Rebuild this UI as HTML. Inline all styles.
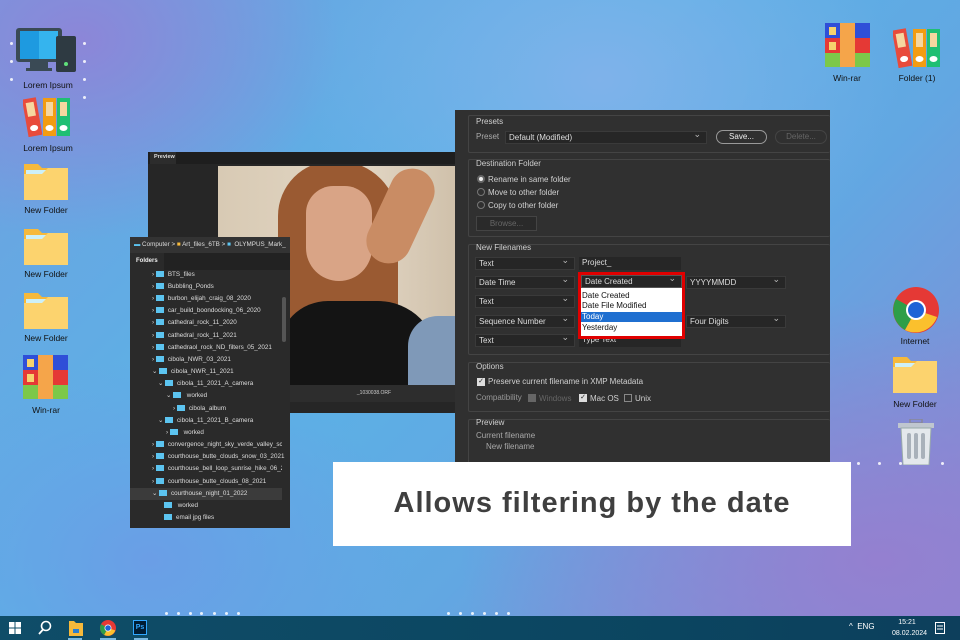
<!DOCTYPE html>
<html><head><meta charset="utf-8"><style>
*{margin:0;padding:0;box-sizing:border-box}
body{width:960px;height:640px;overflow:hidden;position:relative;font-family:"Liberation Sans",sans-serif;
background:
radial-gradient(ellipse 260px 200px at 80px 40px,#8c86d8 0%,rgba(140,134,216,0) 100%),
radial-gradient(ellipse 420px 260px at 880px 560px,#9480d0 0%,rgba(148,128,208,0) 100%),
radial-gradient(ellipse 300px 220px at 600px 80px,#7fb2ea 0%,rgba(127,178,234,0) 100%),
radial-gradient(ellipse 260px 200px at 150px 560px,#6a9ee6 0%,rgba(106,158,230,0) 100%),
linear-gradient(135deg,#6fa0e0 0%,#5bb2e6 40%,#62a7e2 65%,#8a86d2 100%);}
.a{position:absolute}
.lbl{position:absolute;font-size:8.5px;color:#111;text-align:center;width:70px}
.dot{position:absolute;width:3px;height:3px;border-radius:2px;background:#fff;opacity:.85}
.dlg{position:absolute;left:455px;top:110px;width:375px;height:360px;background:#303030}
.t{position:absolute;font-size:8px;color:#d0d0d0;white-space:nowrap}
.sec{position:absolute;border:1px solid #444;border-radius:2px}
.dd{position:absolute;height:13px;background:#262626;border:1px solid #3a3a3a;font-size:8px;color:#ddd;padding-left:3px;line-height:11px}
.dd:after{content:"⌄";position:absolute;right:5px;top:-3px;font-size:9px;color:#bbb}
.fld{position:absolute;height:13px;background:#262626;font-size:8px;color:#ddd;padding-left:3px;line-height:12px}
.fp{position:absolute;left:130px;top:237px;width:160px;height:291px;background:#2a2a2a}
.row{position:absolute;font-size:6.3px;color:#ddd;white-space:nowrap;height:10px;line-height:10px}
.row i{display:inline-block;width:8px;height:6px;background:#5cc4f0;margin-right:4px;vertical-align:-1px}
.fold{position:absolute;width:44px;height:40px}
</style></head><body>

<div class="dot" style="left:10px;top:42px"></div><div class="dot" style="left:10px;top:60px"></div><div class="dot" style="left:10px;top:78px"></div>
<div class="dot" style="left:83px;top:42px"></div><div class="dot" style="left:83px;top:60px"></div><div class="dot" style="left:83px;top:78px"></div>
<div class="dot" style="left:83px;top:96px"></div>
<div class="dot" style="left:165px;top:612px"></div><div class="dot" style="left:177px;top:612px"></div><div class="dot" style="left:189px;top:612px"></div><div class="dot" style="left:200px;top:612px"></div><div class="dot" style="left:213px;top:612px"></div><div class="dot" style="left:225px;top:612px"></div><div class="dot" style="left:237px;top:612px"></div>
<div class="dot" style="left:857px;top:462px"></div><div class="dot" style="left:878px;top:462px"></div><div class="dot" style="left:899px;top:462px"></div><div class="dot" style="left:920px;top:462px"></div><div class="dot" style="left:941px;top:462px"></div>
<div class="dot" style="left:447px;top:612px"></div><div class="dot" style="left:459px;top:612px"></div><div class="dot" style="left:471px;top:612px"></div><div class="dot" style="left:483px;top:612px"></div><div class="dot" style="left:495px;top:612px"></div><div class="dot" style="left:507px;top:612px"></div>

<svg class="a" style="left:16px;top:26px" width="62" height="48" viewBox="0 0 62 48">
<rect x="0" y="2" width="46" height="34" rx="3" fill="#3a4a55"/><rect x="4" y="5" width="38" height="28" fill="#1e9ae0"/><rect x="23" y="5" width="19" height="28" fill="#35b4ee"/>
<rect x="14" y="36" width="18" height="6" fill="#3a4a55"/><rect x="10" y="42" width="26" height="3" fill="#3a4a55"/>
<rect x="40" y="10" width="20" height="36" rx="2" fill="#2e3a42"/><circle cx="50" cy="38" r="2" fill="#5fe07a"/></svg>
<div class="lbl" style="left:13px;top:80px">Lorem Ipsum</div>
<svg class="a" style="left:23px;top:96px" width="50" height="42" viewBox="0 0 50 42">
<g transform="rotate(-10 10 20)"><rect x="2" y="2" width="14" height="38" fill="#e84b3c"/><rect x="5" y="6" width="8" height="14" fill="#f6d7a0"/><ellipse cx="9" cy="32" rx="4" ry="3" fill="#fff"/></g>
<rect x="20" y="2" width="13" height="38" fill="#f39c12"/><rect x="23" y="6" width="7" height="14" fill="#f6d7a0"/><ellipse cx="26.5" cy="32" rx="4" ry="3" fill="#fff"/>
<rect x="34" y="2" width="13" height="38" fill="#1fbf73"/><rect x="37" y="6" width="7" height="14" fill="#f6d7a0"/><ellipse cx="40.5" cy="32" rx="4" ry="3" fill="#fff"/></svg>
<div class="lbl" style="left:13px;top:143px">Lorem Ipsum</div>
<svg class="fold" style="left:24px;top:160px" viewBox="0 0 44 40"><path d="M0 4h14l4 4h26v32H0z" fill="#f6b93b"/><rect x="2" y="10" width="40" height="6" fill="#cdf0f8"/><path d="M0 14h18l6 -6h20v32H0z" fill="#fcd36e"/></svg>
<div class="lbl" style="left:11px;top:205px">New Folder</div>
<svg class="fold" style="left:24px;top:225px" viewBox="0 0 44 40"><path d="M0 4h14l4 4h26v32H0z" fill="#f6b93b"/><rect x="2" y="10" width="40" height="6" fill="#cdf0f8"/><path d="M0 14h18l6 -6h20v32H0z" fill="#fcd36e"/></svg>
<div class="lbl" style="left:11px;top:269px">New Folder</div>
<svg class="fold" style="left:24px;top:289px" viewBox="0 0 44 40"><path d="M0 4h14l4 4h26v32H0z" fill="#f6b93b"/><rect x="2" y="10" width="40" height="6" fill="#cdf0f8"/><path d="M0 14h18l6 -6h20v32H0z" fill="#fcd36e"/></svg>
<div class="lbl" style="left:11px;top:333px">New Folder</div>
<svg class="a" style="left:23px;top:355px" width="45" height="44" viewBox="0 0 45 44"><rect width="15" height="15" fill="#2f4fd8"/><rect x="30" width="15" height="15" fill="#2f4fd8"/><rect y="15" width="15" height="15" fill="#e53935"/><rect x="30" y="15" width="15" height="15" fill="#e53935"/><rect y="30" width="15" height="14" fill="#7cc84a"/><rect x="30" y="30" width="15" height="14" fill="#7cc84a"/><rect x="15" width="15" height="44" fill="#f5a54a"/><rect x="4" y="4" width="7" height="8" fill="#f6d36e"/><rect x="4" y="19" width="7" height="8" fill="#f6d36e"/></svg>
<div class="lbl" style="left:11px;top:405px">Win-rar</div>

<svg class="a" style="left:825px;top:22px" width="45" height="46" viewBox="0 0 45 44"><rect width="15" height="15" fill="#2f4fd8"/><rect x="30" width="15" height="15" fill="#2f4fd8"/><rect y="15" width="15" height="15" fill="#e53935"/><rect x="30" y="15" width="15" height="15" fill="#e53935"/><rect y="30" width="15" height="14" fill="#7cc84a"/><rect x="30" y="30" width="15" height="14" fill="#7cc84a"/><rect x="15" width="15" height="44" fill="#f5a54a"/><rect x="4" y="4" width="7" height="8" fill="#f6d36e"/><rect x="4" y="19" width="7" height="8" fill="#f6d36e"/></svg>
<div class="lbl" style="left:812px;top:73px">Win-rar</div>
<svg class="a" style="left:893px;top:27px" width="50" height="42" viewBox="0 0 50 42">
<g transform="rotate(-10 10 20)"><rect x="2" y="2" width="14" height="38" fill="#e84b3c"/><rect x="5" y="6" width="8" height="14" fill="#f6d7a0"/><ellipse cx="9" cy="32" rx="4" ry="3" fill="#fff"/></g>
<rect x="20" y="2" width="13" height="38" fill="#f39c12"/><rect x="23" y="6" width="7" height="14" fill="#f6d7a0"/><ellipse cx="26.5" cy="32" rx="4" ry="3" fill="#fff"/>
<rect x="34" y="2" width="13" height="38" fill="#1fbf73"/><rect x="37" y="6" width="7" height="14" fill="#f6d7a0"/><ellipse cx="40.5" cy="32" rx="4" ry="3" fill="#fff"/></svg>
<div class="lbl" style="left:882px;top:73px">Folder (1)</div>
<svg class="a" style="left:893px;top:287px" width="46" height="46" viewBox="0 0 46 46"><circle cx="23" cy="23" r="23" fill="#e53935"/><path d="M23 23L3 12A23 23 0 0 0 12 43z" fill="#2e9e48"/><path d="M23 23L12 43A23 23 0 0 0 44 30z" fill="#fbc02d"/><circle cx="23" cy="23" r="10" fill="#fff"/><circle cx="23" cy="23" r="8" fill="#1e63d6"/></svg>
<div class="lbl" style="left:880px;top:336px">Internet</div>
<svg class="fold" style="left:893px;top:353px" viewBox="0 0 44 40"><path d="M0 4h14l4 4h26v32H0z" fill="#f6b93b"/><rect x="2" y="10" width="40" height="6" fill="#cdf0f8"/><path d="M0 14h18l6 -6h20v32H0z" fill="#fcd36e"/></svg>
<div class="lbl" style="left:880px;top:399px">New Folder</div>
<svg class="a" style="left:897px;top:419px" width="38" height="46" viewBox="0 0 38 46"><rect x="13" y="0" width="12" height="4" fill="none" stroke="#889" stroke-width="1.5"/><rect x="1" y="4" width="36" height="5" fill="#bfc6cf"/><path d="M4 9h30l-2 37H6z" fill="#e4e8ec" stroke="#9aa" /><rect x="10" y="14" width="4" height="26" rx="2" fill="#a9b1ba"/><rect x="17" y="14" width="4" height="26" rx="2" fill="#a9b1ba"/><rect x="24" y="14" width="4" height="26" rx="2" fill="#a9b1ba"/></svg>

<div class="a" style="left:148px;top:152px;width:310px;height:261px;background:#262626"></div>
<div class="a" style="left:148px;top:152px;width:310px;height:12px;background:#1e1e1e"></div>
<div class="a" style="left:150px;top:152px;width:26px;height:12px;background:#2c2c2c;font-size:5.5px;color:#ddd;line-height:11px;padding-left:4px;font-weight:bold">Preview</div>
<div class="a" style="left:218px;top:166px;width:240px;height:219px;overflow:hidden;background:linear-gradient(90deg,#d8cab4,#e2d6c4 60%,#cfc0aa)">
 <div class="a" style="left:60px;top:-5px;width:120px;height:200px;border-radius:55px 60px 30px 30px;background:#9a5a32"></div>
 <div class="a" style="left:88px;top:20px;width:66px;height:95px;border-radius:33px 33px 40px 40px;background:#d9a486"></div>
 <div class="a" style="left:160px;top:0px;width:45px;height:100px;border-radius:25px;background:#c98c64;transform:rotate(25deg)"></div>
 <div class="a" style="left:60px;top:135px;width:160px;height:100px;border-radius:50px 60px 0 0;background:#141414"></div>
 <div class="a" style="left:190px;top:150px;width:60px;height:80px;border-radius:30px 0 0 0;background:#7f99b8"></div>
</div>
<div class="a" style="left:290px;top:385px;width:168px;height:17px;background:#2d2d2d;font-size:5px;color:#ccc;text-align:center;line-height:17px">_1030038.ORF</div>

<div class="fp">
 <div class="a" style="left:0;top:0;width:160px;height:16px;background:#333;font-size:6.3px;color:#ddd;line-height:16px;padding-left:4px;white-space:nowrap;overflow:hidden"><span style="color:#5cc4f0">▬</span> Computer &gt; <span style="color:#f6b93b">■</span> Art_files_6TB &gt; <span style="color:#5cc4f0">■</span> &nbsp;OLYMPUS_Mark_</div>
 <div class="a" style="left:0;top:16px;width:160px;height:17px;background:#222"></div>
 <div class="a" style="left:0;top:16px;width:34px;height:17px;background:#2a2a2a;font-size:6px;font-weight:bold;color:#eee;line-height:17px;padding-left:6px">Folders</div>
 <div class="a" style="left:152px;top:60px;width:4px;height:45px;background:#555;border-radius:2px"></div>
 <div class="a" style="left:0;top:251px;width:152px;height:12px;background:#3b3b3b"></div>
</div>
<div class="row" style="left:152px;top:270px">› <i></i>BTS_files</div>
<div class="row" style="left:152px;top:282px">› <i></i>Bubbling_Ponds</div>
<div class="row" style="left:152px;top:294px">› <i></i>burbon_elijah_craig_08_2020</div>
<div class="row" style="left:152px;top:306px">› <i></i>car_build_boondocking_06_2020</div>
<div class="row" style="left:152px;top:318px">› <i></i>cathedral_rock_11_2020</div>
<div class="row" style="left:152px;top:331px">› <i></i>cathedral_rock_11_2021</div>
<div class="row" style="left:152px;top:343px">› <i></i>cathedraol_rock_ND_filters_05_2021</div>
<div class="row" style="left:152px;top:355px">› <i></i>cibola_NWR_03_2021</div>
<div class="row" style="left:152px;top:367px">⌄ <i></i>cibola_NWR_11_2021</div>
<div class="row" style="left:158px;top:379px">⌄ <i></i>cibola_11_2021_A_camera</div>
<div class="row" style="left:166px;top:391px">⌄ <i></i>&nbsp;worked</div>
<div class="row" style="left:173px;top:404px">› <i></i>cibola_album</div>
<div class="row" style="left:158px;top:416px">⌄ <i></i>cibola_11_2021_B_camera</div>
<div class="row" style="left:166px;top:428px">› <i></i>&nbsp;worked</div>
<div class="row" style="left:152px;top:440px;width:130px;overflow:hidden">› <i></i>convergence_night_sky_verde_valley_school</div>
<div class="row" style="left:152px;top:452px">› <i></i>courthouse_butte_clouds_snow_03_2021</div>
<div class="row" style="left:152px;top:464px;width:130px;overflow:hidden">› <i></i>courthouse_bell_loop_sunrise_hike_06_2022</div>
<div class="row" style="left:152px;top:477px">› <i></i>courthouse_butte_clouds_08_2021</div>
<div class="row" style="left:152px;top:489px">⌄ <i></i>courthouse_night_01_2022</div>
<div class="row" style="left:164px;top:501px"><i></i>&nbsp;worked</div>
<div class="row" style="left:164px;top:513px"><i></i>email jpg files</div>

<div class="dlg">
 <div class="sec" style="left:13px;top:5px;width:362px;height:38px;border-right:none"></div>
 <div class="sec" style="left:13px;top:49px;width:362px;height:78px;border-right:none"></div>
 <div class="sec" style="left:13px;top:134px;width:362px;height:111px;border-right:none"></div>
 <div class="sec" style="left:13px;top:252px;width:362px;height:50px;border-right:none"></div>
 <div class="sec" style="left:13px;top:309px;width:362px;height:60px;border-right:none"></div>
</div>
<div class="t" style="left:476px;top:117px">Presets</div>
<div class="t" style="left:476px;top:132px;color:#aaa">Preset</div>
<div class="dd" style="left:505px;top:131px;width:202px">Default (Modified)</div>
<div class="a" style="left:716px;top:130px;width:51px;height:14px;border:1px solid #999;border-radius:7px;font-size:8px;color:#eee;text-align:center;line-height:12px">Save...</div>
<div class="a" style="left:775px;top:130px;width:52px;height:14px;border:1px solid #444;border-radius:7px;font-size:8px;color:#666;text-align:center;line-height:12px">Delete...</div>
<div class="t" style="left:476px;top:159px">Destination Folder</div>
<div class="a" style="left:477px;top:175px;width:8px;height:8px;border-radius:4px;background:#eee;border:2px solid #666"></div>
<div class="t" style="left:488px;top:175px">Rename in same folder</div>
<div class="a" style="left:477px;top:188px;width:8px;height:8px;border-radius:4px;border:1px solid #777"></div>
<div class="t" style="left:488px;top:188px">Move to other folder</div>
<div class="a" style="left:477px;top:201px;width:8px;height:8px;border-radius:4px;border:1px solid #777"></div>
<div class="t" style="left:488px;top:201px">Copy to other folder</div>
<div class="a" style="left:476px;top:216px;width:61px;height:15px;border:1px solid #444;background:#2a2a2a;font-size:8px;color:#666;text-align:center;line-height:13px">Browse...</div>
<div class="t" style="left:476px;top:243px">New Filenames</div>
<div class="dd" style="left:475px;top:257px;width:100px">Text</div>
<div class="fld" style="left:579px;top:257px;width:102px">Project_</div>
<div class="dd" style="left:475px;top:276px;width:100px">Date Time</div>
<div class="dd" style="left:686px;top:276px;width:100px">YYYYMMDD</div>
<div class="dd" style="left:475px;top:295px;width:100px">Text</div>
<div class="dd" style="left:475px;top:315px;width:100px">Sequence Number</div>
<div class="dd" style="left:686px;top:315px;width:100px">Four Digits</div>
<div class="dd" style="left:475px;top:334px;width:100px">Text</div>
<div class="fld" style="left:579px;top:334px;width:102px">Type Text</div>
<div class="a" style="left:578px;top:272px;width:107px;height:67px;border:3px solid #e00000;background:#fff"></div>
<div class="dd" style="left:581px;top:275px;width:101px;border-color:#555">Date Created</div>
<div class="t" style="left:582px;top:291px;color:#111">Date Created</div>
<div class="t" style="left:582px;top:301px;color:#111">Date File Modified</div>
<div class="a" style="left:581px;top:312px;width:101px;height:10px;background:#1f6fd0"></div>
<div class="t" style="left:582px;top:312px;color:#fff">Today</div>
<div class="t" style="left:582px;top:323px;color:#111">Yesterday</div>
<div class="t" style="left:476px;top:362px">Options</div>
<div class="a" style="left:477px;top:378px;width:8px;height:8px;background:#ddd;font-size:7px;line-height:8px;color:#222;text-align:center">✓</div>
<div class="t" style="left:488px;top:377px">Preserve current filename in XMP Metadata</div>
<div class="t" style="left:476px;top:393px;color:#999">Compatibility</div>
<div class="a" style="left:528px;top:394px;width:8px;height:8px;background:#666"></div>
<div class="t" style="left:539px;top:394px;color:#666">Windows</div>
<div class="a" style="left:579px;top:394px;width:8px;height:8px;background:#ddd;font-size:7px;line-height:8px;color:#222;text-align:center">✓</div>
<div class="t" style="left:590px;top:394px">Mac OS</div>
<div class="a" style="left:624px;top:394px;width:8px;height:8px;border:1px solid #888"></div>
<div class="t" style="left:635px;top:394px">Unix</div>
<div class="t" style="left:476px;top:418px">Preview</div>
<div class="t" style="left:476px;top:431px;color:#aaa">Current filename</div>
<div class="t" style="left:486px;top:442px;color:#aaa">New filename</div>

<div class="a" style="left:333px;top:462px;width:518px;height:84px;background:#fff;font-size:29px;font-weight:bold;color:#3f3f3f;text-align:center;line-height:82px;letter-spacing:1px">Allows filtering by the date</div>

<div class="a" style="left:0;top:616px;width:960px;height:24px;background:linear-gradient(90deg,#0f4d68,#0b4560 70%,#0d3f5c)"></div>
<svg class="a" style="left:9px;top:622px" width="12" height="12" viewBox="0 0 12 12" fill="#fff"><rect width="5.5" height="5.5"/><rect x="6.5" width="5.5" height="5.5"/><rect y="6.5" width="5.5" height="5.5"/><rect x="6.5" y="6.5" width="5.5" height="5.5"/></svg>
<svg class="a" style="left:37px;top:620px" width="16" height="16" viewBox="0 0 16 16"><circle cx="9" cy="6" r="4.5" fill="none" stroke="#fff" stroke-width="1.6"/><path d="M6 9.5L2 14" stroke="#fff" stroke-width="1.8"/></svg>
<svg class="a" style="left:69px;top:620px" width="14" height="16" viewBox="0 0 14 16"><path d="M0 1h5l2 2h7v13H0z" fill="#f6b93b"/><rect x="4" y="9" width="6" height="4" fill="#2a7fd0"/></svg>
<div class="a" style="left:68px;top:638px;width:14px;height:2px;background:#7ab8e0"></div>
<svg class="a" style="left:100px;top:620px" width="16" height="16" viewBox="0 0 46 46"><circle cx="23" cy="23" r="23" fill="#e53935"/><path d="M23 23L3 12A23 23 0 0 0 12 43z" fill="#2e9e48"/><path d="M23 23L12 43A23 23 0 0 0 44 30z" fill="#fbc02d"/><circle cx="23" cy="23" r="10" fill="#fff"/><circle cx="23" cy="23" r="8" fill="#1e63d6"/></svg>
<div class="a" style="left:100px;top:638px;width:16px;height:2px;background:#7ab8e0"></div>
<div class="a" style="left:133px;top:620px;width:14px;height:15px;background:#001d34;border:1px solid #31a8ff;color:#31a8ff;font-size:7px;font-weight:bold;line-height:13px;text-align:center">Ps</div>
<div class="a" style="left:134px;top:638px;width:14px;height:2px;background:#7ab8e0"></div>
<div class="a" style="left:849px;top:622px;font-size:8px;color:#fff">^ &nbsp;ENG</div>
<div class="a" style="left:892px;top:617px;width:30px;font-size:7px;color:#fff;text-align:center;line-height:11px">15:21<br>08.02.2024</div>
<svg class="a" style="left:935px;top:622px" width="10" height="12" viewBox="0 0 10 12"><rect x="0.5" y="0.5" width="9" height="11" fill="none" stroke="#fff"/><path d="M2 4h6M2 7h6" stroke="#fff"/></svg>
</body></html>
